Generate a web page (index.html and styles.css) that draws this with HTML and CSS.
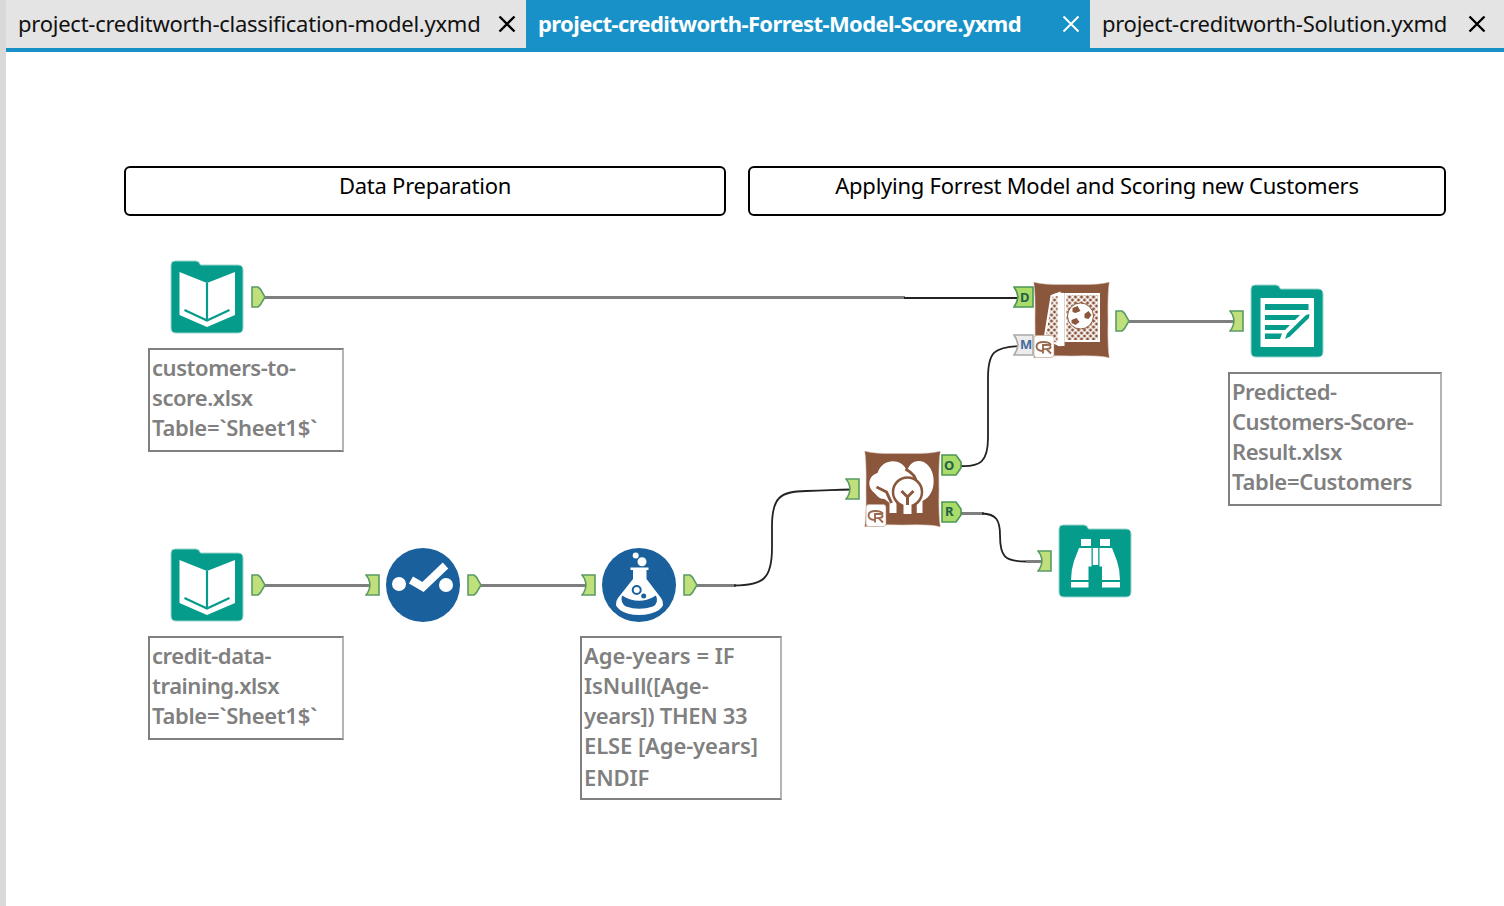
FILE: index.html
```
<!DOCTYPE html>
<html lang="en">
<head>
<meta charset="utf-8">
<title>Workflow</title>
<link rel="stylesheet" href="styles.css">
</head>
<body>
<svg class="defs" width="0" height="0">
  <defs>
    <pattern id="hatch" width="6" height="6" patternUnits="userSpaceOnUse"><path d="M-1 -1L7 7M7 -1L-1 7" stroke="#fff" stroke-width="1.500"/></pattern>
    <symbol id="folder" viewBox="-1 -1 74 74"><path d="M0 4Q0 0 4 0H25Q28 0 29.500 4H67Q72 4 72 9V67Q72 72 67 72H5Q0 72 0 67Z" fill="#059c8c" stroke="#9bd5cc" stroke-width="1"/></symbol>
    <symbol id="book" viewBox="-1 -1 74 74">
      <use href="#folder" x="-1" y="-1" width="74" height="74"/>
      <path d="M8.500 11L36 22L64 11V54L36 66L8.500 54Z" fill="#fff"/>
      <path d="M36 22V60M13.500 49L36 59.500L58.500 49" fill="none" stroke="#059c8c" stroke-width="2.200"/>
    </symbol>
    <symbol id="out" viewBox="0 0 15 22"><path d="M1 1H7Q10 3 11 6L14 11L11 16Q10 19 7 21H1Z" fill="#bfe07a" stroke="#5a9a64" stroke-width="1.600"/></symbol>
    <symbol id="in" viewBox="0 0 15 22"><path d="M1 1H14V21H1Q4.500 17 5 11Q4.500 5 1 1Z" fill="#bfe07a" stroke="#5a9a64" stroke-width="1.600"/></symbol>
    <symbol id="pillow" viewBox="0 0 76 76"><path d="M0 0Q8 3 38 2.500Q68 3 76 0Q74 8 74.500 38Q74 68 76 76Q68 73 38 74Q8 73 0 76Q2 68 1.500 38Q2 8 0 0Z" fill="#8b573c" stroke="#d8c4ba" stroke-width=".6"/></symbol>
    <symbol id="badge" viewBox="0 0 21 23"><rect x=".5" y=".5" width="20" height="22" rx="3" fill="#fff" stroke="#c9aea1" stroke-width=".8"/><path d="M8.500 16C1 15 1 7 10 7Q16 7 17.500 10M9.500 18.500V10H14Q17.500 10 17 12.500Q16 14.500 10 14M13.500 14.500L17.500 18.500" fill="none" stroke="#9a6a50" stroke-width="1.900"/></symbol>
  </defs>
</svg>
<main class="app">
  <nav class="tabs">
    <div class="tab first"><span class="name n1">project-creditworth-classification-model.yxmd</span><svg class="close" viewBox="0 0 18 18"><path d="M1.500 1.500L16.500 16.500M16.500 1.500L1.500 16.500"/></svg></div>
    <div class="tab active"><span class="name n2">project-creditworth-Forrest-Model-Score.yxmd</span><svg class="close" viewBox="0 0 18 18"><path d="M1.500 1.500L16.500 16.500M16.500 1.500L1.500 16.500"/></svg></div>
    <div class="tab last"><span class="name n3">project-creditworth-Solution.yxmd</span><svg class="close" viewBox="0 0 18 18"><path d="M1.500 1.500L16.500 16.500M16.500 1.500L1.500 16.500"/></svg></div>
  </nav>
  <section class="canvas">
    <svg class="wires" viewBox="6 52 1498 854">
      <path class="thick" d="M264 297.500H905M1129 321.500H1236M264 585.500H374M480 585.500H590M696 585.500H736M960 513.500H984M1026 561.500H1044"/>
      <path class="thin" d="M904 298H1020M734 585.500C764 585.500 772 578 772 548V526C772 498 780 491 806 491C828 491 832 489.500 852 489.500M960 466C980 467 988 462 988 438V378C988 352 994 347 1020 346M982 513.500C996 514 1000 520 1000 535C1000 556 1004 561.500 1026 561.500"/>
    </svg>
    <div class="title t1"><span>Data Preparation</span></div>
    <div class="title t2"><span>Applying Forrest Model and Scoring new Customers</span></div>

    <svg class="icon book1"><use href="#book"/></svg>
    <svg class="icon book2"><use href="#book"/></svg>
    <svg class="icon report" viewBox="-1 -1 74 74">
      <use href="#folder" x="-1" y="-1" width="74" height="74"/>
      <path d="M9.500 13H63V62H9.500Z" fill="#fff"/>
      <path d="M14 19H57.500V25H14ZM14 30H49L44 35H14ZM14 40H39L34 45H14ZM14 48.500H31L29 54H14Z" fill="#059c8c"/>
      <path d="M34 54L36 48.500L55 30L58.500 29L58 33L39 51.500Z" fill="#059c8c"/>
    </svg>
    <svg class="icon browse" viewBox="-1 -1 74 74">
      <use href="#folder" x="-1" y="-1" width="74" height="74"/>
      <path d="M22 14H32V21H22ZM41 14H51V21H41ZM20 23H32.500V41.500H29.500V55H12Q12 45 15 36ZM40.500 23H53L58 36Q61 45 61 55H43V41.500H40.500ZM33.800 23H39.200V40H33.800ZM12 57H29.500V62.500H12ZM43 57H61V62.500H43Z" fill="#fff"/>
    </svg>
    <svg class="icon select" viewBox="0 0 74 74">
      <circle cx="37" cy="37" r="37" fill="#19609d"/>
      <circle cx="13" cy="36" r="7" fill="#fff"/><circle cx="60" cy="37" r="7" fill="#fff"/>
      <path d="M25 32L37 39L59.500 17.500" fill="none" stroke="#fff" stroke-width="8"/>
    </svg>
    <svg class="icon formula" viewBox="0 0 74 74">
      <circle cx="37" cy="37" r="37" fill="#19609d"/>
      <circle cx="33.700" cy="7.500" r="3" fill="#fff"/><circle cx="40" cy="13.700" r="4.500" fill="#fff"/>
      <path d="M28.500 19.500H46.500V22H44.500V31L59 50Q64 57 57 62Q49 67 37 67Q25 67 18 62Q11 57 16 50L31 31V22H28.500Z" fill="#fff"/>
      <path d="M20 47.500Q37 58 54 47.500Q57 55 51 58.500Q37 63 24 58.500Q18 55 20 47.500Z" fill="#19609d"/>
      <circle cx="34.700" cy="42" r="4" fill="none" stroke="#19609d" stroke-width="2"/><circle cx="41.700" cy="48" r="2.500" fill="#19609d"/>
    </svg>
    <svg class="icon forest" viewBox="0 0 76 76">
      <use href="#pillow"/>
      <path d="M42 23C44 6 64 5 68.500 24C71 37 66 46 58 50V62H52V40Z" fill="#fff"/>
      <path d="M11 43C2 37 3 25 13 22C18 7 37 7 42 19C48 23 52 27 51 34L32 50V62H25V52L20 48C16 48 13 46 11 43Z" fill="#fff"/>
      <path d="M41 18C48 22 52 27 51 31M12 36L22 41L27 52" fill="none" stroke="#8b573c" stroke-width="3"/>
      <circle cx="43" cy="41" r="14.500" fill="#fff" stroke="#8b573c" stroke-width="2.500"/>
      <path d="M32 54Q34 56 39 57V63H33V55M47 57Q50 56 52 54V63H47Z" fill="#8b573c"/>
      <path d="M39 50H47V63H39Z" fill="#fff"/>
      <path d="M37 40L43 46L49 40M43 46V54" fill="none" stroke="#8b573c" stroke-width="3"/>
      <use href="#badge" x="1" y="53" width="21" height="23"/>
    </svg>
    <svg class="icon score" viewBox="0 0 76 76">
      <use href="#pillow"/>
      <path d="M18 14L26 11V63L11 57Z" fill="url(#hatch)" stroke="#fff" stroke-width="2"/>
      <path d="M18 14Q22 10 31 11V64H24V14Z" fill="#fff"/>
      <rect x="32" y="12" width="33.500" height="47" fill="url(#hatch)" stroke="#fff" stroke-width="2"/>
      <circle cx="47" cy="34" r="13" fill="#fff" stroke="#8b573c"/>
      <path d="M39 26L44 24L47 29L42 31L39 30ZM51 32L55 29L58 33L55 37L51 36ZM38 38L43 36L46 40L42 43L38 41Z" fill="#8b573c"/>
      <use href="#badge" x="0" y="53" width="21" height="23"/>
    </svg>

    <svg class="port p1"><use href="#out"/></svg>
    <svg class="port p2"><use href="#out"/></svg>
    <svg class="port p3"><use href="#in"/></svg>
    <svg class="port p4"><use href="#out"/></svg>
    <svg class="port p5"><use href="#in"/></svg>
    <svg class="port p6"><use href="#out"/></svg>
    <svg class="port p7"><use href="#in"/></svg>
    <svg class="port p8"><use href="#in"/></svg>
    <svg class="port p9"><use href="#out"/></svg>
    <svg class="port p10"><use href="#in"/></svg>
    <svg class="port wide w1" viewBox="0 0 21 22"><path d="M1 1H20V21H1Q4 17 5 11Q4 5 1 1Z" fill="#a9dc68" stroke="#4c9656" stroke-width="1.600"/><text x="7" y="15.500">D</text></svg>
    <svg class="port wide w2" viewBox="0 0 21 22"><path d="M1 1H20V21H1Q4 17 5 11Q4 5 1 1Z" fill="#ececec" stroke="#a9a9a9" stroke-width="1.600"/><text class="m" x="7" y="14.500">M</text></svg>
    <svg class="port wide w3" viewBox="0 0 21 22"><path d="M1 1H15L20 8V14L15 21H1Z" fill="#a9dc68" stroke="#4c9656" stroke-width="1.600"/><text x="3" y="15.500">O</text></svg>
    <svg class="port wide w4" viewBox="0 0 21 22"><path d="M1 1H15L20 8V14L15 21H1Z" fill="#a9dc68" stroke="#4c9656" stroke-width="1.600"/><text x="4" y="14.500">R</text></svg>

    <div class="note a1"><span>customers-to-</span><span>score.xlsx</span><span class="loose">Table=`Sheet1$`</span></div>
    <div class="note a2"><span>credit-data-</span><span>training.xlsx</span><span class="loose">Table=`Sheet1$`</span></div>
    <div class="note a3"><span class="open">Age-years = IF</span><span class="wider">IsNull([Age-</span><span class="loose">years]) THEN 33</span><span class="wider">ELSE [Age-years]</span><span class="end">ENDIF</span></div>
    <div class="note a4"><span>Predicted-</span><span>Customers-Score-</span><span>Result.xlsx</span><span class="loose">Table=Customers</span></div>
  </section>
</main>
</body>
</html>
```
FILE: styles.css
```
* { box-sizing: border-box; }
body { margin: 0; background: #fff; font-family: "Noto Sans", "Open Sans", sans-serif; overflow: hidden; }
.defs { position: absolute; }
.app { width: 1504px; height: 906px; border-left: 6px solid #d9d9d9; display: flex; flex-direction: column; }
.tabs { display: flex; height: 52px; border-bottom: 4px solid #1791c7; background: #e4e4e4; }
.tab { display: flex; align-items: center; justify-content: space-between; height: 48px; padding: 0 10px 0 12px; font-size: 22px; color: #111; white-space: nowrap; }
.first { width: 520px; }
.active { width: 564px; background: #1791c7; color: #fff; font-weight: 700; }
.last { width: 414px; padding-right: 18px; }
.name { padding-bottom: 2px; }
.n1 { letter-spacing: -.25px; }
.n2 { letter-spacing: -.6px; }
.n3 { letter-spacing: -.28px; }
.close { width: 18px; height: 18px; fill: none; stroke: #000; stroke-width: 2.4; flex: none; }
.active .close { stroke: #fff; stroke-width: 2; }
.canvas { position: relative; flex: 1; }
.wires { position: absolute; left: 0; top: 0; width: 1498px; height: 854px; fill: none; }
.thick { stroke: #7f7f7f; stroke-width: 3; }
.thin { stroke: #222; stroke-width: 1.8; }
.title { position: absolute; top: 114px; height: 50px; border: 2px solid #000; border-radius: 6px; text-align: center; font-size: 22px; line-height: 34px; letter-spacing: -.25px; color: #000; white-space: nowrap; }
.t1 { left: 118px; width: 602px; }
.t2 { left: 742px; width: 698px; }
.icon { position: absolute; width: 74px; height: 74px; }
.book1 { left: 164px; top: 208px; }
.book2 { left: 164px; top: 496px; }
.report { left: 1244px; top: 232px; }
.browse { left: 1052px; top: 472px; }
.select { left: 380px; top: 496px; }
.formula { left: 596px; top: 496px; }
.forest, .score { width: 77px; height: 76px; }
.forest { left: 858px; top: 399px; }
.score { left: 1027px; top: 230px; }
.port { position: absolute; width: 15px; height: 22px; }
.p1 { left: 245px; top: 234px; }
.p2 { left: 245px; top: 522px; }
.p3 { left: 359px; top: 522px; }
.p4 { left: 461px; top: 522px; }
.p5 { left: 575px; top: 522px; }
.p6 { left: 677px; top: 522px; }
.p7 { left: 839px; top: 426px; }
.p8 { left: 1031px; top: 498px; }
.p9 { left: 1109px; top: 258px; }
.p10 { left: 1223px; top: 258px; }
.wide { width: 21px; font-size: 13px; font-weight: 700; fill: #22604c; }
.w1 { left: 1007px; top: 234px; }
.w2 { left: 1007px; top: 282px; }
.w3 { left: 935px; top: 402px; }
.w4 { left: 935px; top: 449px; }
.m { fill: #456b9c; }
.note { position: absolute; display: flex; flex-direction: column; align-items: flex-start; border: 2px solid #808080; border-right-color: #b4b4b4; padding: 2px; background: #fff; color: #808080; font-size: 22px; font-weight: 600; line-height: 30px; letter-spacing: -.45px; white-space: nowrap; }
.loose { letter-spacing: -.32px; }
.wider { letter-spacing: -.1px; }
.open { letter-spacing: 0; }
.end { letter-spacing: -.1px; padding-top: 2px; }
.a1 { left: 142px; top: 296px; width: 196px; height: 104px; }
.a2 { left: 142px; top: 584px; width: 196px; height: 104px; }
.a3 { left: 574px; top: 584px; width: 202px; height: 164px; }
.a4 { left: 1222px; top: 320px; width: 214px; height: 134px; }
```
